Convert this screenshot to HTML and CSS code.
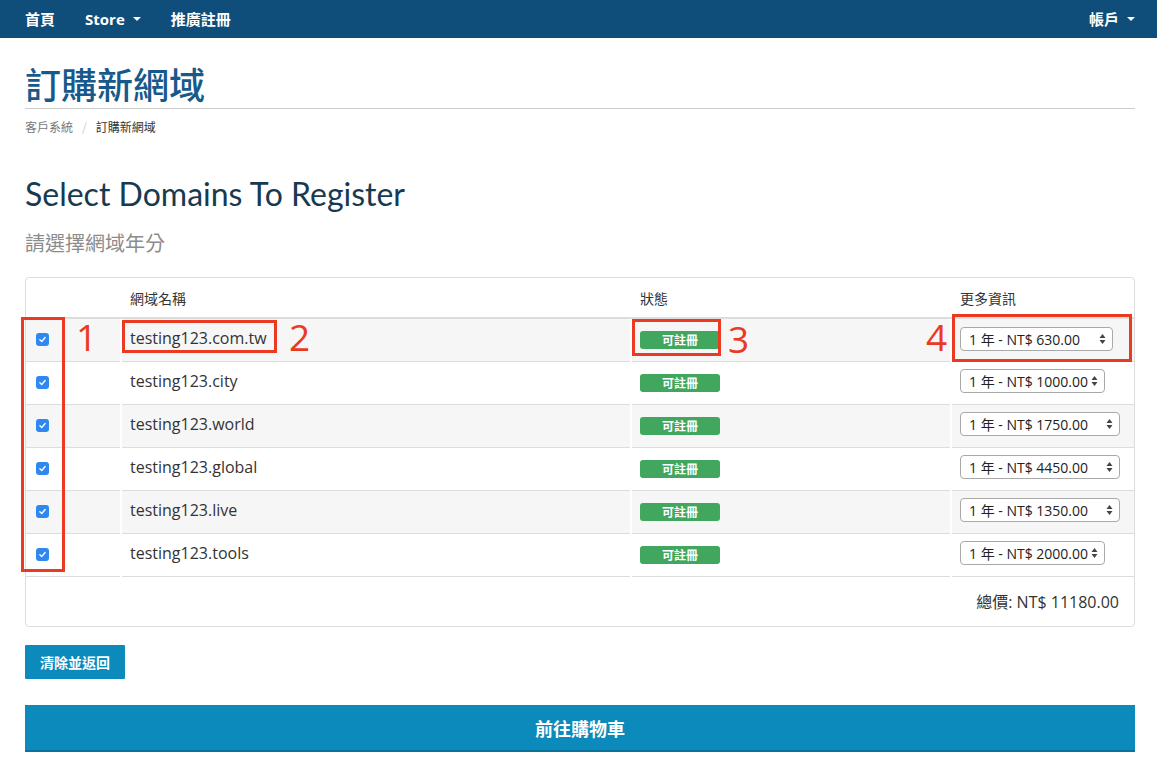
FILE: index.html
```html
<!DOCTYPE html>
<html lang="zh-Hant">
<head>
<meta charset="utf-8">
<title>訂購新網域</title>
<link rel="stylesheet" href="styles.css">
</head>
<body>
<nav class="topbar">
  <ul class="nav-left">
    <li>首頁</li>
    <li>Store <span class="caret"></span></li>
    <li>推廣註冊</li>
  </ul>
  <ul class="nav-right">
    <li>帳戶 <span class="caret"></span></li>
  </ul>
</nav>

<main class="page">
  <div class="page-header">
    <h1>訂購新網域</h1>
  </div>
  <div class="breadcrumb">
    <span class="crumb">客戶系統</span><span class="sep">/</span><span class="crumb active">訂購新網域</span>
  </div>

  <h2 class="section-title">Select Domains To Register</h2>
  <h3 class="section-sub">請選擇網域年分</h3>

  <div class="panel">
    <table class="domains">
      <thead>
        <tr>
          <th class="c-check"></th>
          <th class="c-name">網域名稱</th>
          <th class="c-status">狀態</th>
          <th class="c-info">更多資訊</th>
        </tr>
      </thead>
      <tbody>
        <tr class="odd">
          <td class="c-check"><span class="cb"><svg viewBox="0 0 12 12" width="9" height="9"><path d="M2.5 6.3 L5 8.6 L9.5 3.4" fill="none" stroke="#fff" stroke-width="1.8" stroke-linecap="round" stroke-linejoin="round"/></svg></span></td>
          <td class="c-name">testing123.com.tw</td>
          <td class="c-status"><span class="badge">可註冊</span></td>
          <td class="c-info"><span class="select w-a"><span>1 年 - NT$ 630.00</span><svg class="arrows" viewBox="0 0 7 12" width="7" height="12"><path d="M3.5 1 L6.5 5 L0.5 5 Z M3.5 11 L6.5 7 L0.5 7 Z" fill="#444"/></svg></span></td>
        </tr>
        <tr>
          <td class="c-check"><span class="cb"><svg viewBox="0 0 12 12" width="9" height="9"><path d="M2.5 6.3 L5 8.6 L9.5 3.4" fill="none" stroke="#fff" stroke-width="1.8" stroke-linecap="round" stroke-linejoin="round"/></svg></span></td>
          <td class="c-name">testing123.city</td>
          <td class="c-status"><span class="badge">可註冊</span></td>
          <td class="c-info"><span class="select w-b"><span>1 年 - NT$ 1000.00</span><svg class="arrows" viewBox="0 0 7 12" width="7" height="12"><path d="M3.5 1 L6.5 5 L0.5 5 Z M3.5 11 L6.5 7 L0.5 7 Z" fill="#444"/></svg></span></td>
        </tr>
        <tr class="odd">
          <td class="c-check"><span class="cb"><svg viewBox="0 0 12 12" width="9" height="9"><path d="M2.5 6.3 L5 8.6 L9.5 3.4" fill="none" stroke="#fff" stroke-width="1.8" stroke-linecap="round" stroke-linejoin="round"/></svg></span></td>
          <td class="c-name">testing123.world</td>
          <td class="c-status"><span class="badge">可註冊</span></td>
          <td class="c-info"><span class="select w-c"><span>1 年 - NT$ 1750.00</span><svg class="arrows" viewBox="0 0 7 12" width="7" height="12"><path d="M3.5 1 L6.5 5 L0.5 5 Z M3.5 11 L6.5 7 L0.5 7 Z" fill="#444"/></svg></span></td>
        </tr>
        <tr>
          <td class="c-check"><span class="cb"><svg viewBox="0 0 12 12" width="9" height="9"><path d="M2.5 6.3 L5 8.6 L9.5 3.4" fill="none" stroke="#fff" stroke-width="1.8" stroke-linecap="round" stroke-linejoin="round"/></svg></span></td>
          <td class="c-name">testing123.global</td>
          <td class="c-status"><span class="badge">可註冊</span></td>
          <td class="c-info"><span class="select w-c"><span>1 年 - NT$ 4450.00</span><svg class="arrows" viewBox="0 0 7 12" width="7" height="12"><path d="M3.5 1 L6.5 5 L0.5 5 Z M3.5 11 L6.5 7 L0.5 7 Z" fill="#444"/></svg></span></td>
        </tr>
        <tr class="odd">
          <td class="c-check"><span class="cb"><svg viewBox="0 0 12 12" width="9" height="9"><path d="M2.5 6.3 L5 8.6 L9.5 3.4" fill="none" stroke="#fff" stroke-width="1.8" stroke-linecap="round" stroke-linejoin="round"/></svg></span></td>
          <td class="c-name">testing123.live</td>
          <td class="c-status"><span class="badge">可註冊</span></td>
          <td class="c-info"><span class="select w-c"><span>1 年 - NT$ 1350.00</span><svg class="arrows" viewBox="0 0 7 12" width="7" height="12"><path d="M3.5 1 L6.5 5 L0.5 5 Z M3.5 11 L6.5 7 L0.5 7 Z" fill="#444"/></svg></span></td>
        </tr>
        <tr>
          <td class="c-check"><span class="cb"><svg viewBox="0 0 12 12" width="9" height="9"><path d="M2.5 6.3 L5 8.6 L9.5 3.4" fill="none" stroke="#fff" stroke-width="1.8" stroke-linecap="round" stroke-linejoin="round"/></svg></span></td>
          <td class="c-name">testing123.tools</td>
          <td class="c-status"><span class="badge">可註冊</span></td>
          <td class="c-info"><span class="select w-b"><span>1 年 - NT$ 2000.00</span><svg class="arrows" viewBox="0 0 7 12" width="7" height="12"><path d="M3.5 1 L6.5 5 L0.5 5 Z M3.5 11 L6.5 7 L0.5 7 Z" fill="#444"/></svg></span></td>
        </tr>
      </tbody>
      <tfoot>
        <tr>
          <td colspan="4" class="total">總價: NT$ 11180.00</td>
        </tr>
      </tfoot>
    </table>

    <div class="mark box1"></div>
    <div class="mark box2"></div>
    <div class="mark box3"></div>
    <div class="mark box4"></div>
    <span class="num n1">1</span>
    <span class="num n2">2</span>
    <span class="num n3">3</span>
    <span class="num n4">4</span>
  </div>

  <div class="actions">
    <button class="btn btn-small" type="button">清除並返回</button>
    <button class="btn btn-block" type="button">前往購物車</button>
  </div>
</main>
</body>
</html>
```

FILE: styles.css
```css
* { box-sizing: border-box; }

html, body {
  margin: 0;
  padding: 0;
  background: #fff;
}

body {
  font-family: "Open Sans", "Noto Sans CJK TC", sans-serif;
  color: #333;
  font-size: 14px;
}

/* ---------- top bar ---------- */
.topbar {
  height: 38px;
  background: #0f4d7a;
  display: flex;
  justify-content: space-between;
  align-items: center;
  padding: 0 22px 0 25px;
}

.topbar ul {
  list-style: none;
  margin: 0;
  padding: 0;
  display: flex;
  gap: 30px;
}

.topbar li {
  color: #fff;
  font-weight: 700;
  font-size: 15px;
  line-height: 38px;
  font-family: "Open Sans", "Noto Sans CJK TC", sans-serif;
  display: flex;
  align-items: center;
}

.caret {
  display: inline-block;
  width: 0;
  height: 0;
  margin-left: 8px;
  border-left: 4px solid transparent;
  border-right: 4px solid transparent;
  border-top: 4px solid #fff;
}

/* ---------- page ---------- */
.page {
  padding: 0 22px 0 25px;
}

.page-header {
  margin-top: 23px;
  padding-bottom: 3px;
  border-bottom: 1px solid #ccc;
}

.page-header h1 {
  margin: 0;
  font-family: "Noto Sans CJK TC", sans-serif;
  font-weight: 500;
  font-size: 36px;
  line-height: 44px;
  color: #17598b;
}

.breadcrumb {
  margin-top: 9px;
  font-family: "Noto Sans CJK TC", sans-serif;
  font-size: 12px;
  line-height: 18px;
  color: #777;
}

.breadcrumb .sep {
  color: #ccc;
  padding: 0 9px;
}

.breadcrumb .active {
  color: #333;
}

.section-title {
  margin: 40px 0 0;
  font-family: "Lato", sans-serif;
  font-weight: 400;
  font-size: 32px;
  line-height: 36px;
  color: #173a50;
}

.section-sub {
  margin: 16px 0 0;
  font-family: "Noto Sans CJK TC", sans-serif;
  font-weight: 400;
  font-size: 20px;
  line-height: 30px;
  color: #8c8c8c;
}

/* ---------- panel / table ---------- */
.panel {
  position: relative;
  margin-top: 19px;
  border: 1px solid #ddd;
  border-radius: 4px;
  width: 1110px;
}

.domains {
  width: 100%;
  border-collapse: collapse;
  border-spacing: 0;
}

.domains th,
.domains td {
  padding: 0 8px;
  text-align: left;
  vertical-align: middle;
}

.domains th + th,
.domains td + td {
  border-left: 2px solid #fff;
}

.domains thead th {
  height: 40px;
  font-family: "Noto Sans CJK TC", sans-serif;
  font-weight: 400;
  font-size: 14px;
  color: #333;
  border-bottom: 2px solid #ddd;
  padding-top: 0;
}

.domains tbody td {
  height: 43px;
  border-top: 1px solid #ddd;
  font-size: 16px;
  color: #333;
  padding-bottom: 3px;
}

.domains tbody tr:first-child td {
  border-top: 0;
  height: 43px;
}

.domains tbody tr.odd td {
  background: #f6f6f6;
}

.c-check { width: 95px; }
.c-name { width: 510px; }
.c-status { width: 320px; }

.domains td.c-check {
  padding-left: 10px;
}

.cb {
  display: inline-flex;
  align-items: center;
  justify-content: center;
  width: 13px;
  height: 13px;
  border-radius: 3px;
  background: #2f88ef;
  vertical-align: middle;
}

.badge {
  display: inline-block;
  width: 80px;
  height: 18px;
  line-height: 18px;
  text-align: center;
  background: #41a65e;
  color: #fff;
  font-family: "Noto Sans CJK TC", sans-serif;
  font-size: 12px;
  font-weight: 700;
  border-radius: 3px;
  vertical-align: middle;
}

.select {
  display: inline-flex;
  align-items: center;
  justify-content: space-between;
  height: 24px;
  padding: 0 6px 0 8px;
  border: 1px solid #a9a9a9;
  border-radius: 4px;
  background: #fff;
  font-family: "Open Sans", "Noto Sans CJK TC", sans-serif;
  font-size: 14px;
  color: #222;
  white-space: nowrap;
  vertical-align: middle;
}

.select.w-a { width: 153px; }
.select.w-b { width: 145px; }
.select.w-c { width: 160px; }

.arrows { flex: none; margin-left: 2px; }

.domains tfoot td.total {
  height: 50px;
  border-top: 1px solid #ddd;
  text-align: right;
  padding-right: 15px;
  font-family: "Open Sans", "Noto Sans CJK TC", sans-serif;
  font-size: 16px;
  color: #333;
}

/* ---------- annotations ---------- */
.mark {
  position: absolute;
  border: 3px solid #ea3a22;
}

.box1 { left: -5px; top: 39px; width: 44px; height: 255px; }
.box2 { left: 96px; top: 42px; width: 155px; height: 33px; }
.box3 { left: 606px; top: 41px; width: 89px; height: 37px; }
.box4 { left: 926px; top: 36px; width: 180px; height: 48px; }

.num {
  position: absolute;
  font-family: "Open Sans", sans-serif;
  font-weight: 400;
  font-size: 37px;
  line-height: 37px;
  color: #ea3a22;
}

.n1 { left: 50px; top: 40px; }
.n2 { left: 263px; top: 40px; }
.n3 { left: 702px; top: 42px; }
.n4 { left: 900px; top: 40px; }

/* ---------- buttons ---------- */
.actions {
  display: flex;
  flex-direction: column;
  align-items: flex-start;
  gap: 26px;
  margin-top: 18px;
}

.btn {
  border: 0;
  margin: 0;
  color: #fff;
  font-family: "Noto Sans CJK TC", sans-serif;
  font-weight: 700;
  background: #0b8abb;
  cursor: pointer;
}

.btn-small {
  height: 34px;
  padding: 0 15px;
  font-size: 14px;
  border-radius: 1px;
}

.btn-block {
  width: 1110px;
  height: 47px;
  font-size: 18px;
  border-bottom: 2px solid #0a729b;
}
```
